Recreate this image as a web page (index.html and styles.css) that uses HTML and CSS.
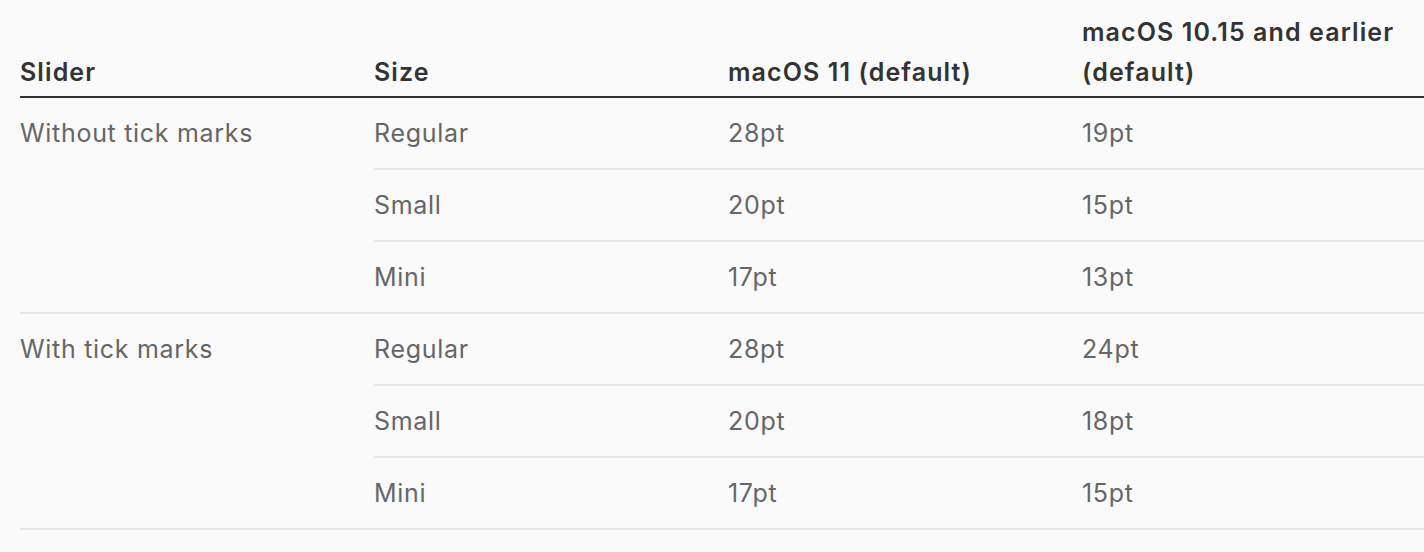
FILE: index.html
```html
<!DOCTYPE html>
<html lang="en">
<head>
<meta charset="utf-8">
<title>Slider sizes</title>
<link rel="stylesheet" href="styles.css">
</head>
<body>
<table class="spec-table">
  <colgroup>
    <col class="col-a">
    <col class="col-b">
    <col class="col-c">
    <col class="col-d">
  </colgroup>
  <thead>
    <tr>
      <th>Slider</th>
      <th>Size</th>
      <th>macOS 11 (default)</th>
      <th>macOS 10.15 and earlier (default)</th>
    </tr>
  </thead>
  <tbody>
    <tr>
      <td rowspan="3">Without tick marks</td>
      <td>Regular</td>
      <td>28pt</td>
      <td>19pt</td>
    </tr>
    <tr>
      <td>Small</td>
      <td>20pt</td>
      <td>15pt</td>
    </tr>
    <tr>
      <td>Mini</td>
      <td>17pt</td>
      <td>13pt</td>
    </tr>
    <tr>
      <td rowspan="3">With tick marks</td>
      <td>Regular</td>
      <td>28pt</td>
      <td>24pt</td>
    </tr>
    <tr>
      <td>Small</td>
      <td>20pt</td>
      <td>18pt</td>
    </tr>
    <tr>
      <td>Mini</td>
      <td>17pt</td>
      <td>15pt</td>
    </tr>
  </tbody>
</table>
</body>
</html>
```

FILE: styles.css
```css
html, body {
  margin: 0;
  padding: 0;
  background: #fafafa;
}

body {
  font-family: "Inter", "Roboto", "Liberation Sans", sans-serif;
  font-size: 25px;
  line-height: 40px;
  color: #666;
}

.spec-table {
  margin-left: 20px;
  width: 1404px;
  border-collapse: collapse;
  table-layout: fixed;
}

.col-a, .col-b, .col-c { width: 354px; }

.spec-table th {
  text-align: left;
  vertical-align: bottom;
  font-weight: 600;
  color: #333;
  letter-spacing: 1.1px;
  padding: 12px 20px 4px 0;
  border-bottom: 2px solid #333;
}

.spec-table td {
  text-align: left;
  vertical-align: top;
  letter-spacing: 0.7px;
  padding: 15px 20px 15px 0;
  border-bottom: 2px solid #e6e6e6;
}
```
